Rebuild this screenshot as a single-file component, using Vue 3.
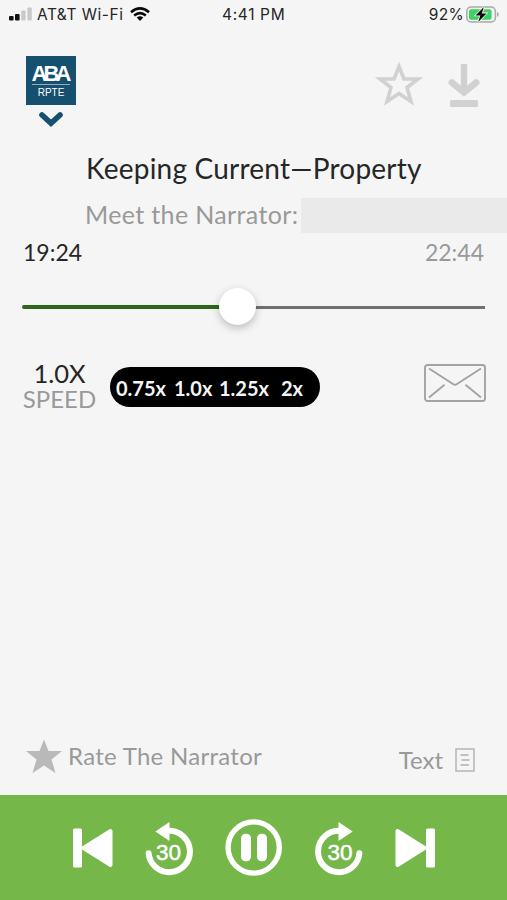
<script setup>
import { ref, computed } from 'vue'

const speeds = ['0.75x', '1.0x', '1.25x', '2x']
const elapsed = ref('19:24')
const total = ref('22:44')
const progress = ref(46.5)
const speed = ref('1.0x')
const playing = ref(true)

const speedLabel = computed(() => speed.value.toUpperCase())
</script>

<template>
    <div class="player">
        <div class="status">
            <svg class="signal" width="24" height="14" viewBox="0 0 24 14">
                <rect x="0" y="9" width="4.6" height="4.5" rx="1" fill="#111" />
                <rect x="6" y="7" width="4.6" height="6.5" rx="1" fill="#111" />
                <rect x="12.2" y="3.5" width="4.4" height="10" rx="1" fill="#c9c9c9" />
                <rect x="18.4" y="0.5" width="4.4" height="13" rx="1" fill="#c9c9c9" />
            </svg>
            <span class="carrier">AT&amp;T Wi-Fi</span>
            <svg class="wifi" width="20" height="14" viewBox="0 0 20 14">
                <g fill="none" stroke="#0a0a0a" stroke-width="2.6">
                    <path d="M1 5.2Q10 -2.4 19 5.2" />
                    <path d="M4.2 8.5Q10 3.6 15.8 8.5" />
                </g>
                <path d="M6.7 10.6Q10 7.8 13.3 10.6L10 13.9Z" fill="#0a0a0a" />
            </svg>
            <span class="clock">4:41 PM</span>
            <span class="percent">92%</span>
            <svg class="battery" width="33" height="17" viewBox="0 0 33 17">
                <rect x="0.8" y="1" width="28.6" height="15" rx="4.3" fill="none" stroke="#a9a9a9" stroke-width="1.5" />
                <path d="M31 6v5Q32.8 10.3 32.8 8.5T31 6Z" fill="#a9a9a9" />
                <rect x="3" y="3.2" width="22.5" height="10.6" rx="2" fill="#3fd263" />
                <path d="M17.8 1L9.5 9.4H14.3L12.2 16L20.5 7.4H15.9Z" fill="#0a0a0a" stroke="#f5f5f5" stroke-width="1.6" paint-order="stroke" />
            </svg>
        </div>

        <header class="head">
            <div class="brand">
                <div class="logo">
                    <span class="mark">ABA</span>
                    <span class="section">RPTE</span>
                </div>
                <svg class="chevron" width="26" height="18" viewBox="0 0 26 18">
                    <path d="M4 4L13 12.3L22 4" fill="none" stroke="#15506f" stroke-width="5.6" stroke-linecap="round" />
                </svg>
            </div>
            <div class="actions">
                <svg width="48" height="46" viewBox="0 0 48 46">
                    <path d="M24 5.5L29 18H43L32 26.5L36 40.5L24 32.5L12 40.5L16 26.5L5 18H19Z" fill="none" stroke="#d1d1d1" stroke-width="3.6" />
                </svg>
                <svg width="32" height="46" viewBox="0 0 32 46">
                    <path d="M16 2V29" fill="none" stroke="#d1d1d1" stroke-width="6.4" />
                    <path d="M3.8 20.5L16 30.5L28.2 20.5" fill="none" stroke="#d1d1d1" stroke-width="6.6" stroke-linecap="round" />
                    <rect x="2" y="38" width="28" height="7" rx="1.5" fill="#d1d1d1" />
                </svg>
            </div>
        </header>

        <h1 class="title">Keeping Current—Property</h1>
        <div class="narrator">
            <span class="narrator-label">Meet the Narrator:</span>
            <span class="narrator-name"></span>
        </div>

        <div class="times">
            <span class="elapsed">{{ elapsed }}</span>
            <span class="total">{{ total }}</span>
        </div>
        <div class="slider">
            <div class="done" :style="{ width: progress + '%' }"></div>
            <div class="knob" :style="{ left: progress + '%' }"></div>
        </div>

        <div class="options">
            <div class="speed">
                <span class="speed-value">{{ speedLabel }}</span>
                <span class="speed-label">SPEED</span>
            </div>
            <div class="speed-list">
                <span v-for="s in speeds" :key="s" @click="speed = s">{{ s }}</span>
            </div>
            <svg class="mail" width="62" height="38" viewBox="0 0 62 38">
                <g fill="none" stroke="#a3a3a3" stroke-width="1.9">
                    <rect x="1" y="1" width="60" height="36" rx="2.5" />
                    <path d="M5 4.5L29 20Q31 21.5 33 20L57 4.5M5 33.5L20.5 20.8M57 33.5L41.5 20.8" />
                </g>
            </svg>
        </div>

        <div class="extras">
            <div class="rate">
                <svg width="36" height="35" viewBox="0 0 36 35">
                    <path d="M18 0.5L22.5 12H36L25.5 20.5L29.5 34L18 26.5L6.5 34L10.5 20.5L0 12H13.5Z" fill="#b9b9b9" />
                </svg>
                <span>Rate The Narrator</span>
            </div>
            <div class="text-link">
                <span>Text</span>
                <svg width="20" height="24" viewBox="0 0 20 24">
                    <g fill="none" stroke="#b1b1b1" stroke-width="1.4">
                        <rect x="1" y="1" width="18" height="22" />
                        <path d="M5.5 7H13.5M6.5 12H14.5M5.5 17H14" />
                    </g>
                </svg>
            </div>
        </div>

        <footer class="controls">
            <svg class="prev" width="40" height="40" viewBox="0 0 40 40">
                <rect x="0" y="0.5" width="9" height="39" rx="1.5" fill="#fff" />
                <path d="M10.5 20L37.5 3V37Z" fill="#fff" stroke="#fff" stroke-width="4" stroke-linejoin="round" />
            </svg>
            <svg class="back" width="48" height="54" viewBox="0 0 48 54">
                <path d="M23 8.8A20.7 20.7 0 1 1 3.6 31.3" fill="none" stroke="#fff" stroke-width="6" stroke-linecap="round" />
                <path d="M10.3 9.5L24.5 0V19Z" fill="#fff" />
                <text x="23.5" y="37.8">30</text>
            </svg>
            <svg class="pause" width="58" height="58" viewBox="0 0 58 58" @click="playing = !playing">
                <circle cx="28.7" cy="28.5" r="25.6" fill="none" stroke="#fff" stroke-width="5.4" />
                <g v-if="playing" fill="#fff">
                    <rect x="16" y="14.8" width="10" height="27.5" rx="4.5" />
                    <rect x="32" y="14.8" width="10" height="27.5" rx="4.5" />
                </g>
                <path v-else d="M22 16L43 29L22 42Z" fill="#fff" />
            </svg>
            <svg class="forward" width="48" height="54" viewBox="0 0 48 54">
                <path d="M25 8.8A20.7 20.7 0 1 0 44.4 31.3" fill="none" stroke="#fff" stroke-width="6" stroke-linecap="round" />
                <path d="M37.7 9.5L23.5 0V19Z" fill="#fff" />
                <text x="25" y="37.8">30</text>
            </svg>
            <svg class="next" width="40" height="40" viewBox="0 0 40 40">
                <rect x="31" y="0.5" width="9" height="39" rx="1.5" fill="#fff" />
                <path d="M29.5 20L2.5 3V37Z" fill="#fff" stroke="#fff" stroke-width="4" stroke-linejoin="round" />
            </svg>
        </footer>
    </div>
</template>

<style>
body {
    margin: 0;
    background: #f5f5f5;
}
</style>

<style scoped>
.player {
    display: flex;
    flex-direction: column;
    width: 507px;
    height: 900px;
    overflow: hidden;
    background: #f5f5f5;
    color: #262626;
    font-family: Lato, sans-serif;
    white-space: nowrap;
}

svg {
    display: block;
    flex: none;
}

.status {
    display: flex;
    align-items: center;
    height: 28px;
    padding: 0 8px 0 9px;
    font-family: Inter, sans-serif;
    font-size: 15.5px;
    line-height: 28px;
}

.status span {
    padding-top: 1px;
}

.carrier {
    width: 93px;
    margin-left: 4px;
    letter-spacing: 0.5px;
}

.clock {
    width: 68px;
    margin-left: 72px;
    letter-spacing: 0.65px;
}

.percent {
    margin-left: auto;
    letter-spacing: 0.3px;
}

.battery {
    margin-left: 2px;
}

.head {
    display: flex;
    justify-content: space-between;
    height: 122px;
    box-sizing: border-box;
    padding: 28px 27px 0 26px;
}

.brand {
    display: flex;
    flex-direction: column;
    align-items: center;
    width: 50px;
}

.logo {
    display: flex;
    flex-direction: column;
    align-items: center;
    width: 50px;
    height: 49px;
    background: #15506f;
}

.mark {
    height: 19px;
    margin: 9px 3px 0 0;
    color: #fff;
    font: 700 22px/18px "Liberation Sans", sans-serif;
    letter-spacing: -3.9px;
}

.section {
    width: 38px;
    border-top: 1px solid #8fadbc;
    color: #fff;
    font: 10px/15px "Liberation Sans", sans-serif;
    text-align: center;
}

.chevron {
    margin-top: 6px;
}

.actions {
    display: flex;
    gap: 25px;
    padding-top: 5px;
}

.actions svg:last-child {
    margin-top: 1px;
}

.title {
    height: 34px;
    margin: 0 0 0 86px;
    font-size: 28px;
    font-weight: 400;
    line-height: 36px;
    letter-spacing: 0.22px;
}

.narrator {
    display: flex;
    height: 35px;
    margin-top: 14px;
    padding-left: 85px;
    color: #999;
    font-size: 25px;
    line-height: 33px;
    letter-spacing: 0.36px;
}

.narrator-label {
    width: 216px;
}

.narrator-name {
    flex: 1;
    background: #eaeaea;
}

.times {
    display: flex;
    justify-content: space-between;
    height: 27px;
    margin-top: 5px;
    padding: 0 23px;
    font-size: 23px;
    line-height: 28px;
}

.total {
    color: #999;
}

.slider {
    position: relative;
    display: flex;
    align-items: center;
    height: 38px;
    margin: 23px 22px 0;
}

.slider::after {
    content: "";
    flex: 1;
    height: 3px;
    background: #707070;
}

.done {
    height: 4px;
    border-radius: 2px 0 0 2px;
    background: #2d661a;
}

.knob {
    position: absolute;
    top: 0;
    width: 37px;
    height: 37px;
    margin-left: -18.5px;
    border-radius: 50%;
    background: #fff;
    box-shadow: 0 3px 9px rgba(0, 0, 0, 0.24);
}

.options {
    display: flex;
    align-items: flex-start;
    margin-top: 34px;
    padding: 0 21px 0 22px;
}

.speed {
    display: flex;
    flex-direction: column;
    align-items: center;
    width: 75px;
}

.speed-value {
    font-size: 25.5px;
    line-height: 26px;
}

.speed-label {
    margin-top: 1px;
    color: #999;
    font-size: 24px;
    line-height: 24px;
}

.speed-list {
    display: grid;
    grid-template-columns: 58px 45px 62px auto;
    box-sizing: border-box;
    width: 210px;
    height: 40px;
    margin: 7px 0 0 13px;
    padding-left: 6px;
    border-radius: 20px;
    background: #000;
    color: #f5f5f5;
    font-size: 20px;
    font-weight: 700;
    line-height: 42px;
}

.mail {
    margin: 4px 0 0 auto;
}

.extras {
    display: flex;
    justify-content: space-between;
    align-items: flex-start;
    height: 56px;
    margin-top: auto;
    padding: 0 32px 0 26px;
    color: #999;
    font-size: 24px;
}

.rate {
    display: flex;
    gap: 6px;
    line-height: 34px;
    letter-spacing: 0.28px;
}

.text-link {
    display: flex;
    align-items: center;
    gap: 12px;
    margin-top: 4px;
    line-height: 34px;
}

.controls {
    display: flex;
    align-items: flex-start;
    height: 105px;
    box-sizing: border-box;
    padding: 24px 0 0 73px;
    background: #75b748;
}

.controls text {
    fill: #fff;
    stroke: #fff;
    stroke-width: 0.5px;
    font: 22.5px "Liberation Sans", sans-serif;
    text-anchor: middle;
}

.prev,
.next {
    margin-top: 9px;
}

.back,
.forward {
    margin: 3px 0 0 32px;
}

.pause,
.next {
    margin-left: 32px;
}
</style>
